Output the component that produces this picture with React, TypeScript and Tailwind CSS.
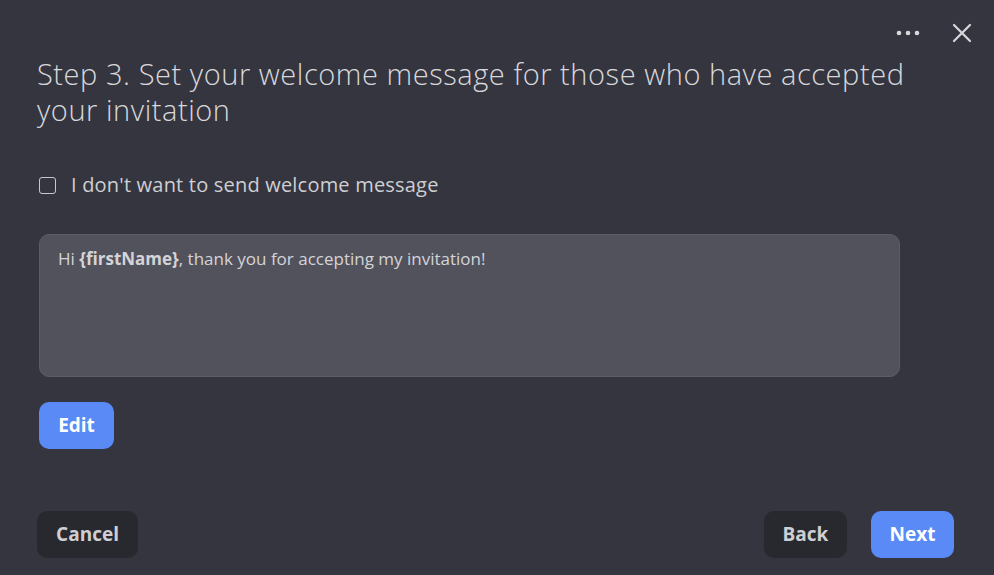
import React from 'react';

const App = () => {
    return (
        <div className="w-[994px] h-[575px] bg-[#35353f] text-[#d4d4d8] font-['Open_Sans',sans-serif] flex flex-col px-[37px] pt-[22px] pb-[17px] overflow-hidden">
            {/* Top actions */}
            <div className="flex justify-end items-center gap-[32px] h-[22px] -mr-[15px]">
                <svg width="24" height="6" viewBox="0 0 24 6" fill="#d8d8dc">
                    <circle cx="3" cy="3" r="2.3" />
                    <circle cx="12" cy="3" r="2.3" />
                    <circle cx="21" cy="3" r="2.3" />
                </svg>
                <svg width="20" height="20" viewBox="0 0 20 20" stroke="#d8d8dc" strokeWidth="2.2" strokeLinecap="round">
                    <path d="M2 2 L18 18 M18 2 L2 18" />
                </svg>
            </div>

            {/* Title */}
            <h1 className="mt-[12px] max-w-[885px] text-[29px] leading-[36px] font-light text-[#d8d8dc] tracking-[0.55px]">
                Step 3. Set your welcome message for those who have accepted your invitation
            </h1>

            {/* Checkbox */}
            <label className="mt-[42px] flex items-center gap-[15px] ml-[2px]">
                <span className="w-[17px] h-[17px] rounded-[3px] border-[1.5px] border-[#c8c8cc]" />
                <span className="text-[20px] text-[#cfcfd3] tracking-[0.2px]">I don't want to send welcome message</span>
            </label>

            {/* Message box */}
            <div className="mt-[34px] ml-[2px] w-[861px] h-[143px] rounded-[10px] bg-[#52525c] border border-[#5c5c66] px-[18px] pt-[11px] text-[17px] text-[#d4d4d8]">
                Hi <span className="font-bold">{'{firstName}'}</span>, thank you for accepting my invitation!
            </div>

            <div className="mt-[25px] ml-[2px]">
                <button className="w-[75px] h-[47px] rounded-[10px] bg-[#5a8af5] text-white text-[19px] font-bold">
                    Edit
                </button>
            </div>

            <div className="mt-auto flex items-center">
                <button className="w-[101px] h-[47px] rounded-[10px] bg-[#28292e] text-[#cfcfd3] text-[19px] font-bold">
                    Cancel
                </button>
                <div className="ml-auto flex gap-[24px] mr-[3px]">
                    <button className="w-[83px] h-[47px] rounded-[10px] bg-[#28292e] text-[#cfcfd3] text-[19px] font-bold">
                        Back
                    </button>
                    <button className="w-[83px] h-[47px] rounded-[10px] bg-[#5a8af5] text-white text-[19px] font-bold">
                        Next
                    </button>
                </div>
            </div>
        </div>
    );
};

export default App;
